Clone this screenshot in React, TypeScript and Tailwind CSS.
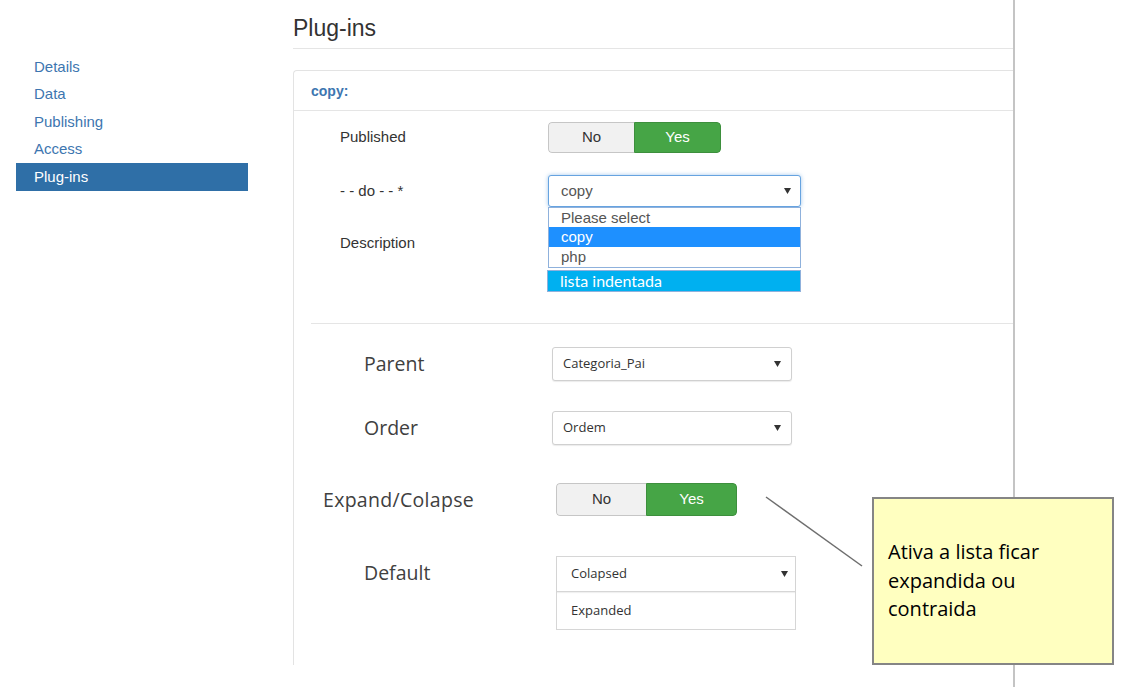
import React from "react";

const Caret = () => (
  <svg width="7" height="6" viewBox="0 0 7 6" className="shrink-0">
    <path d="M0 0 H7 L3.5 6 Z" fill="#333" />
  </svg>
);

const Toggle = ({ big = false }: { big?: boolean }) => (
  <div
    className={`flex rounded-[4px] overflow-hidden text-[15px] font-['Liberation_Sans',Arial,sans-serif] ${
      big ? "h-[33px] w-[181px]" : "h-[31px] w-[173px]"
    }`}
  >
    <div className="flex-1 flex items-center justify-center bg-[#f1f1f1] border border-[#c6c6c6] border-r-0 rounded-l-[4px] text-[#333]">
      No
    </div>
    <div className="flex-1 flex items-center justify-center bg-[#46a546] border border-[#3d8f3d] rounded-r-[4px] text-white">
      Yes
    </div>
  </div>
);

const MockSelect = ({ value, w = "w-[240px]" }: { value: string; w?: string }) => (
  <div
    className={`${w} h-[34px] flex items-center justify-between pl-[10px] pr-[10px] border border-[#d0d0d0] rounded-[3px] shadow-[0_1px_1px_rgba(0,0,0,0.08)] text-[13px] text-[#333] bg-white`}
  >
    <span>{value}</span>
    <Caret />
  </div>
);

const navItems = ["Details", "Data", "Publishing", "Access", "Plug-ins"];

export default function App() {
  return (
    <div className="relative w-[1140px] h-[687px] bg-white overflow-hidden flex font-['Liberation_Sans',Arial,sans-serif]">
      {/* Sidebar */}
      <aside className="w-[293px] shrink-0 pt-[53px] pl-[16px]">
        <ul className="w-[232px]">
          {navItems.map((item) => (
            <li
              key={item}
              className={`h-[27.5px] flex items-center pl-[18px] text-[15px] ${
                item === "Plug-ins" ? "bg-[#2f6fa7] text-white" : "text-[#3d76b0]"
              }`}
            >
              {item}
            </li>
          ))}
        </ul>
      </aside>

      {/* Main */}
      <main className="w-[722px] shrink-0 h-full border-r-2 border-[#c4c4c4] overflow-hidden">
        <div className="h-[49px] pt-[14px] border-b border-[#e5e5e5]">
          <h1 className="text-[23px] leading-[28px] text-[#333]">Plug-ins</h1>
        </div>

        <div className="mt-[21px] h-[595px] border border-r-0 border-b-0 border-[#e3e3e3] rounded-tl-[4px]">
          <div className="h-[40px] flex items-center pl-[17px] pt-[2px] border-b border-[#e5e5e5]">
            <span className="text-[14px] font-bold text-[#3d76b0]">copy:</span>
          </div>

          {/* Joomla form part */}
          <div className="pt-[11px] text-[15px] text-[#333]">
            <div className="flex items-center pl-[46px]">
              <span className="w-[208px]">Published</span>
              <Toggle />
            </div>

            <div className="flex items-center pl-[46px] mt-[22px]">
              <span className="w-[208px]">- - do - - *</span>
              <div className="relative">
                <div className="w-[253px] h-[32px] flex items-center justify-between pl-[12px] pr-[9px] border border-[#66a3e0] rounded-[3px] shadow-[0_0_4px_rgba(102,163,224,0.6)] text-[#555] bg-white">
                  <span>copy</span>
                  <Caret />
                </div>
                <div className="absolute left-0 top-[32px] w-[253px] z-10">
                  <div className="border border-[#8fb1dc] bg-white h-[61px] text-[#555] leading-[19px]">
                    <div className="h-[19px] pl-[12px]">Please select</div>
                    <div className="h-[20px] pl-[12px] bg-[#1e90ff] text-white">copy</div>
                    <div className="h-[20px] pl-[12px]">php</div>
                  </div>
                  <div className="mt-[2px] -ml-[1px] w-[254px] h-[22px] bg-[#00b0f0] border border-[#8fb1dc] flex items-center pl-[12px] text-[16px] text-white font-['Lato',sans-serif]">
                    lista indentada
                  </div>
                </div>
              </div>
            </div>

            <div className="flex items-center pl-[46px] mt-[26px] h-[20px]">
              <span className="w-[208px]">Description</span>
            </div>
          </div>

          <div className="ml-[17px] mt-[70px] border-t border-[#e5e5e5]" />

          {/* Mockup part */}
          <div className="font-['Open_Sans',sans-serif] text-[#404040]">
            <div className="flex items-center pl-[70px] mt-[23px]">
              <span className="w-[188px] text-[19.5px]">Parent</span>
              <MockSelect value="Categoria_Pai" />
            </div>
            <div className="flex items-center pl-[70px] mt-[30px]">
              <span className="w-[188px] text-[19.5px]">Order</span>
              <MockSelect value="Ordem" />
            </div>
            <div className="flex items-center pl-[29px] mt-[38px]">
              <span className="w-[233px] text-[19.5px] tracking-[0.3px]">Expand/Colapse</span>
              <Toggle big />
            </div>
            <div className="flex items-start pl-[70px] mt-[40px]">
              <span className="w-[192px] text-[19.5px] h-[33px] flex items-center">Default</span>
              <div className="w-[240px] border border-[#d6d6d6] text-[13px] text-[#333]">
                <div className="h-[35px] flex items-center justify-between pl-[14px] pr-[7px] border-b border-[#d6d6d6] shadow-[0_1px_1px_rgba(0,0,0,0.06)]">
                  <span>Colapsed</span>
                  <Caret />
                </div>
                <div className="h-[37px] flex items-center pl-[14px]">Expanded</div>
              </div>
            </div>
          </div>
        </div>
      </main>

      {/* Annotation callout */}
      <svg className="absolute left-0 top-0 pointer-events-none" width="1140" height="687">
        <line x1="766" y1="497" x2="862" y2="566" stroke="#6e6e6e" strokeWidth="1.5" />
      </svg>
      <div className="absolute left-[872px] top-[497px] w-[242px] h-[168px] bg-[#ffffc0] border-2 border-[#858585] flex items-center pl-[14px] font-['Open_Sans',sans-serif] text-[20px] leading-[28.5px] text-black">
        <p>
          Ativa a lista ficar
          <br />
          expandida ou
          <br />
          contraida
        </p>
      </div>
    </div>
  );
}
